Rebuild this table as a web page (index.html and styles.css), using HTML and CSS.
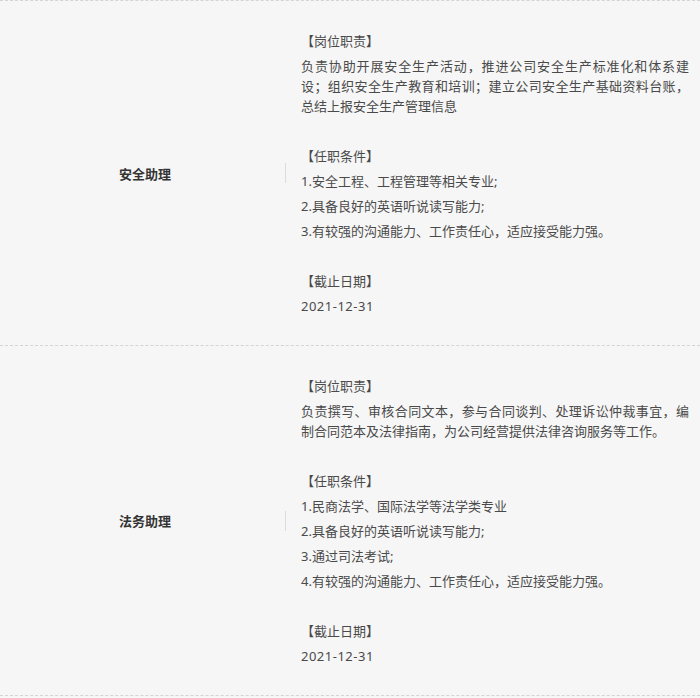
FILE: index.html
```html
<!DOCTYPE html>
<html lang="zh-CN">

<head>
    <meta charset="UTF-8">
    <meta name="viewport" content="width=device-width, initial-scale=1.0">
    <title>招聘岗位</title>
    <link rel="stylesheet" href="styles.css">
</head>

<body>
    <div class="job-list">
        <div class="job-row">
            <div class="job-name">安全助理</div>
            <div class="divider"></div>
            <div class="job-info">
                <p>【岗位职责】</p>
                <p class="desc"><span class="full-line">负责协助开展安全生产活动，推进公司安全生产标准化和体系建</span>设；组织安全生产教育和培训；建立公司安全生产基础资料台账，总结上报安全生产管理信息</p>
                <p class="blank"></p>
                <p>【任职条件】</p>
                <p>1.安全工程、工程管理等相关专业;</p>
                <p>2.具备良好的英语听说读写能力;</p>
                <p>3.有较强的沟通能力、工作责任心，适应接受能力强。</p>
                <p class="blank"></p>
                <p>【截止日期】</p>
                <p class="date">2021-12-31</p>
            </div>
        </div>

        <div class="job-row">
            <div class="job-name">法务助理</div>
            <div class="divider"></div>
            <div class="job-info">
                <p>【岗位职责】</p>
                <p class="desc">负责撰写、审核合同文本，参与合同谈判、处理诉讼仲裁事宜，编制合同范本及法律指南，为公司经营提供法律咨询服务等工作。</p>
                <p class="blank"></p>
                <p>【任职条件】</p>
                <p>1.民商法学、国际法学等法学类专业</p>
                <p>2.具备良好的英语听说读写能力;</p>
                <p>3.通过司法考试;</p>
                <p>4.有较强的沟通能力、工作责任心，适应接受能力强。</p>
                <p class="blank"></p>
                <p>【截止日期】</p>
                <p class="date">2021-12-31</p>
            </div>
        </div>
    </div>
</body>

</html>
```

FILE: styles.css
```css
* {
    margin: 0;
    padding: 0;
    box-sizing: border-box;
}

body {
    background: #f6f6f6;
    color: #333;
    font-family: "Noto Sans", "Noto Sans CJK SC", sans-serif;
    font-size: 13px;
}

.job-list {
    border-top: 1px dashed #d4d4d4;
}

.job-row {
    display: flex;
    align-items: center;
    border-bottom: 1px dashed #d4d4d4;
}

.job-name {
    flex: 0 0 285px;
    padding-left: 5px;
    text-align: center;
    font-weight: bold;
    color: #333;
}

.divider {
    width: 1px;
    height: 20px;
    background: #dcdcdc;
}

.job-info {
    width: 403px;
    padding: 30px 0 24px 15px;
    color: #4a4a4a;
}

.job-info p {
    line-height: 20px;
    margin-bottom: 5px;
}

.job-info p.desc {
    text-align: justify;
}

.job-info .full-line {
    display: block;
    text-align-last: justify;
}

.job-info p.blank {
    height: 20px;
}

.job-info p.date {
    letter-spacing: 0.5px;
}
```
